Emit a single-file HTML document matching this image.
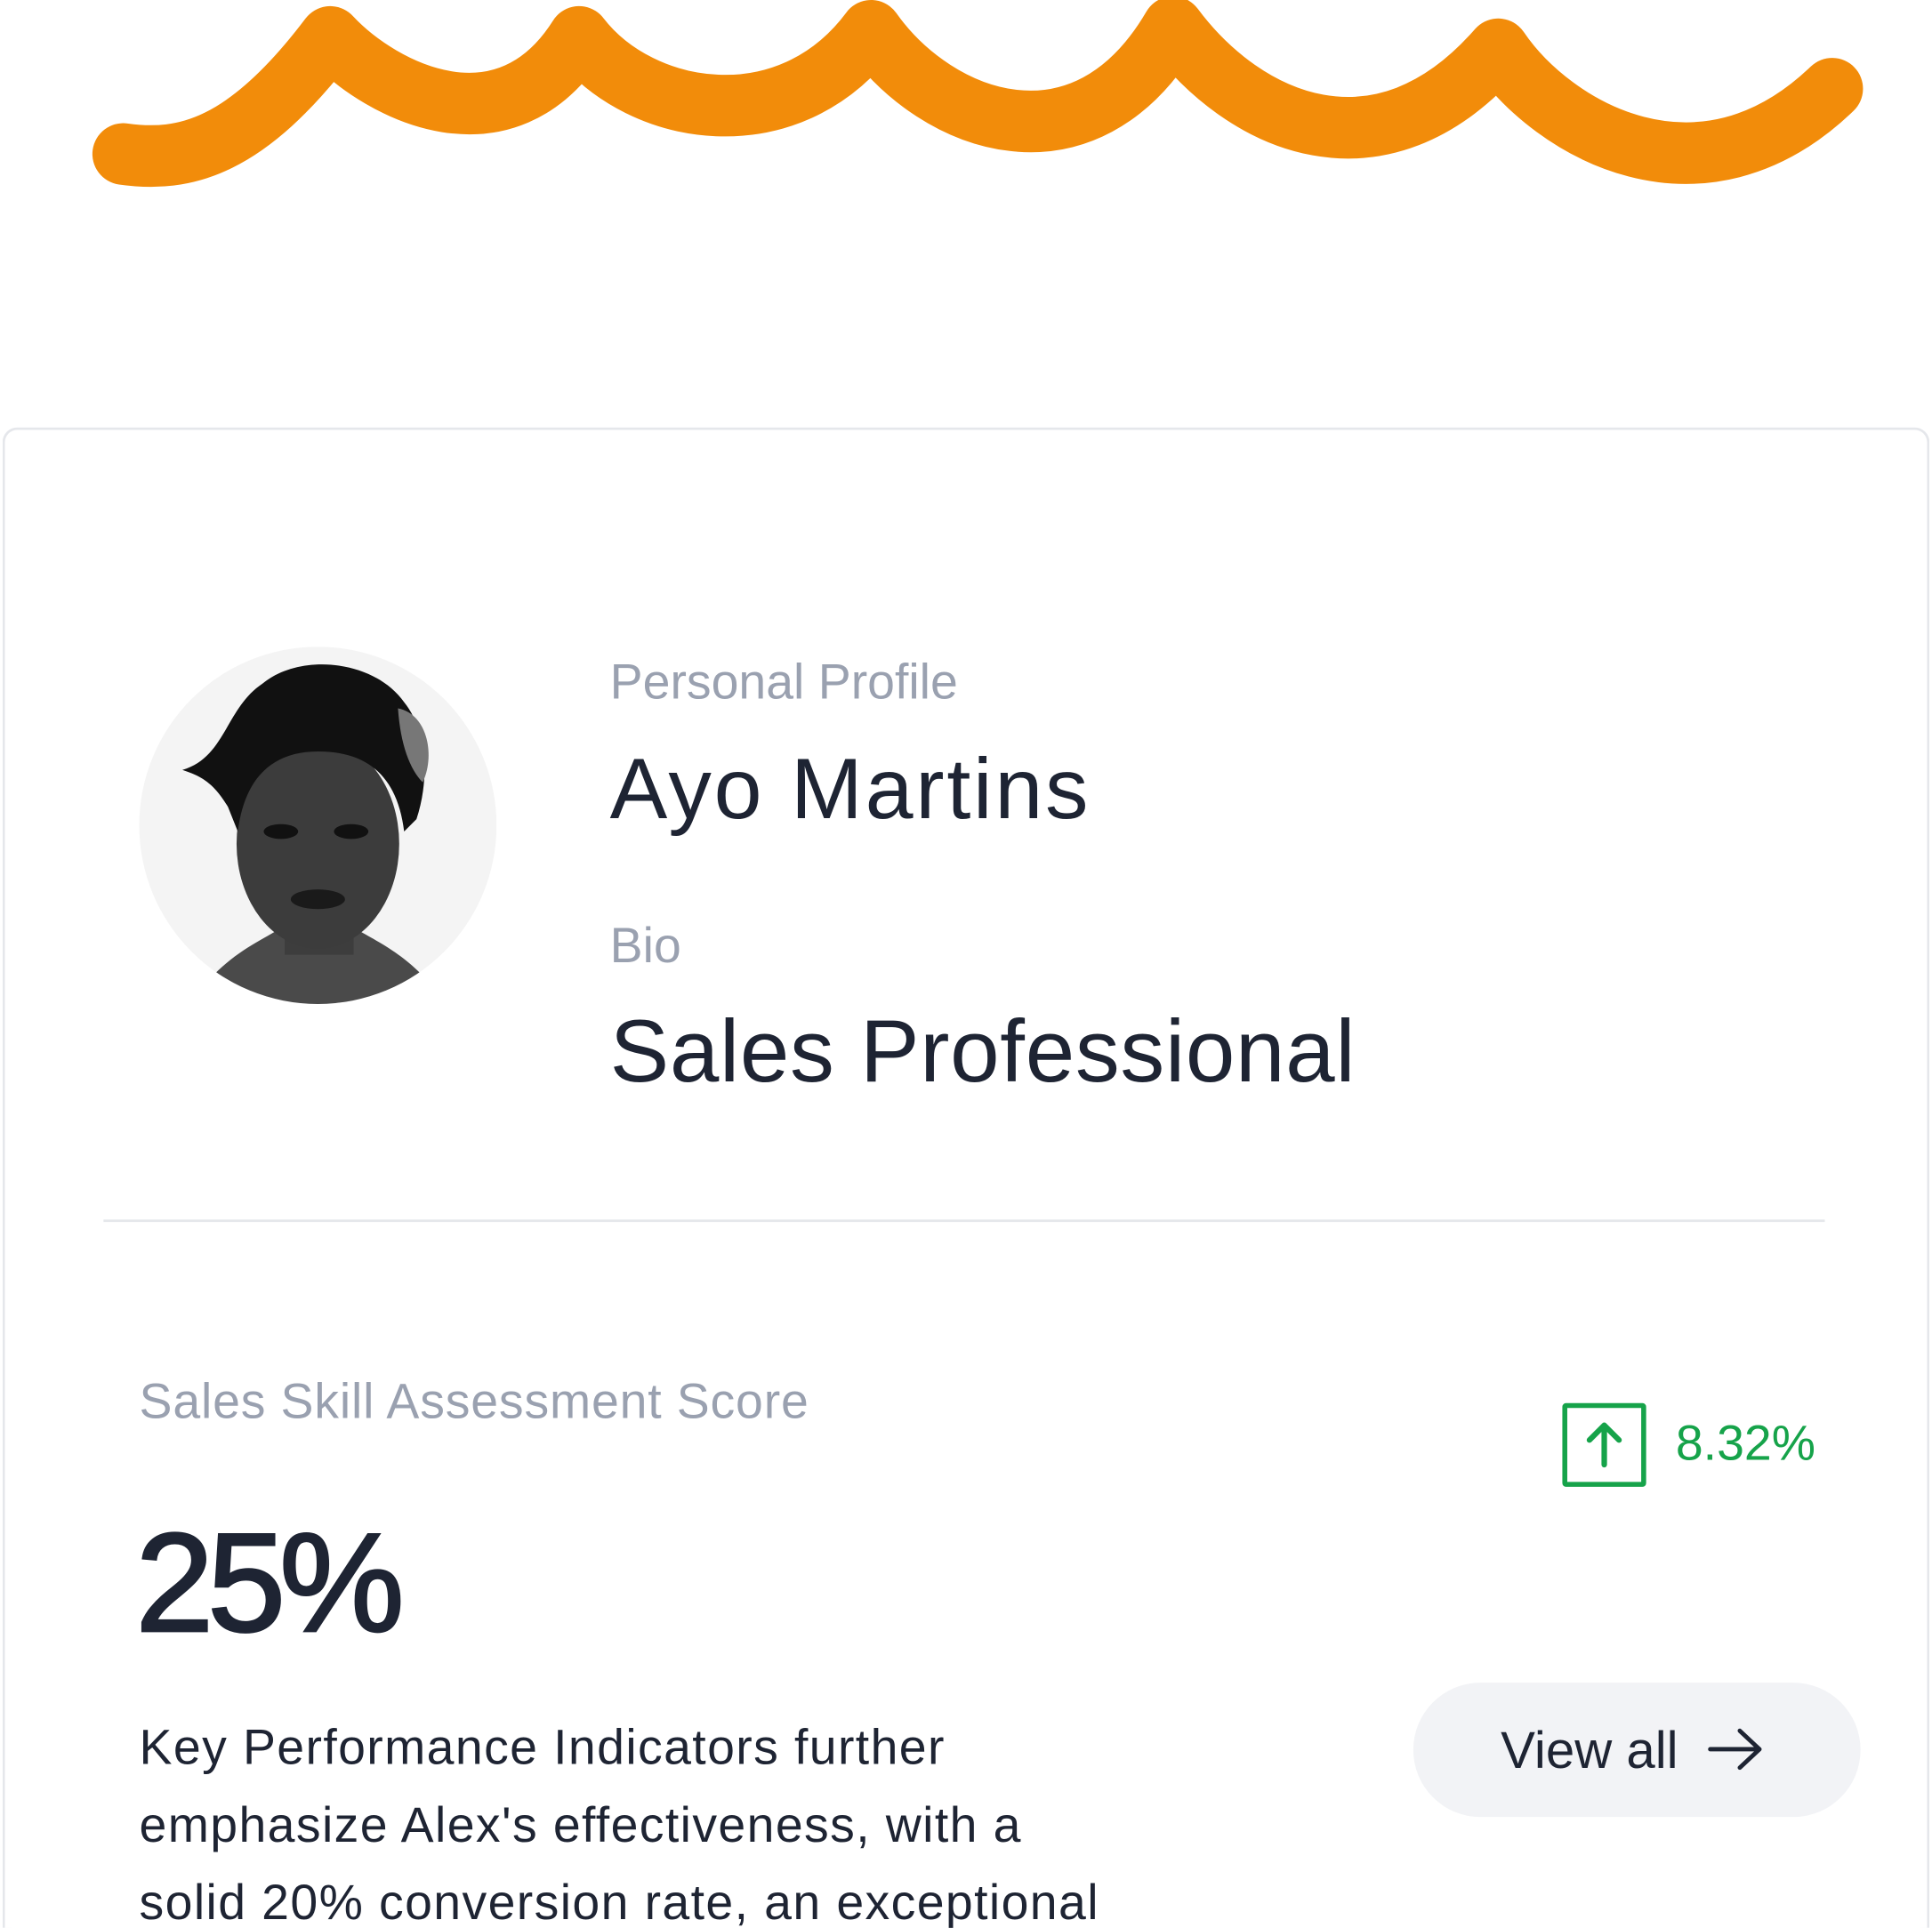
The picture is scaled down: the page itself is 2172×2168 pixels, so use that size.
<!DOCTYPE html>
<html><head><meta charset="utf-8"><style>
html,body{margin:0;padding:0;background:#fff;overflow:hidden;width:2172px;height:2168px;position:relative}
#w{position:absolute;left:0;top:0;width:1568px;height:1565px;overflow:hidden;transform:scale(1.3852);transform-origin:0 0;font-family:"Liberation Sans",sans-serif;color:#1e2433}
.t{position:absolute;white-space:nowrap}
.g{color:#9aa1b0}
</style></head><body><div id="w">
<svg style="position:absolute;left:0;top:0" width="1568" height="200" viewBox="0 0 1568 200">
<path d="M100,125 C150,132 200,120 268,30 C310,75 410,125 470,30 C520,95 640,115 707,25 C760,100 880,145 952,22 C1010,100 1120,150 1216,40 C1260,105 1380,175 1487,72" fill="none" stroke="#f28c0a" stroke-width="50" stroke-linecap="round" stroke-linejoin="round"/>
</svg>
<div style="position:absolute;left:2px;top:347px;width:1564px;height:1218px;border:2px solid #e5e7eb;border-bottom:none;border-radius:12px 12px 0 0;box-sizing:border-box"></div>
<svg style="position:absolute;left:113px;top:525px" width="290" height="290" viewBox="0 0 290 290">
<defs><clipPath id="c"><circle cx="145" cy="145" r="145"/></clipPath></defs>
<g clip-path="url(#c)">
<rect width="290" height="290" fill="#f4f4f4"/>
<path d="M30,310 C60,250 100,240 120,225 L170,225 C190,240 230,250 260,310 Z" fill="#4a4a4a"/>
<rect x="118" y="180" width="56" height="70" fill="#3d3d3d"/>
<ellipse cx="145" cy="160" rx="66" ry="85" fill="#3c3c3c"/>
<path d="M35,100 C70,90 70,50 100,30 C130,5 190,10 215,45 C235,70 235,110 225,140 L215,150 C210,110 190,85 145,85 C105,85 85,110 80,150 L72,130 C60,110 50,105 35,100 Z" fill="#111"/>
<path d="M210,50 C235,55 240,90 230,110 C220,100 212,80 210,50Z" fill="#777"/>
<ellipse cx="115" cy="150" rx="14" ry="6" fill="#111"/><ellipse cx="172" cy="150" rx="14" ry="6" fill="#111"/>
<ellipse cx="145" cy="205" rx="22" ry="8" fill="#1a1a1a"/>
</g></svg>
<div class="t g" style="left:495px;top:532px;font-size:40px">Personal Profile</div>
<div class="t" style="left:495px;top:600px;font-size:70px;letter-spacing:2px">Ayo Martins</div>
<div class="t g" style="left:495px;top:746px;font-size:40px">Bio</div>
<div class="t" style="left:495px;top:813px;font-size:72px;letter-spacing:0.5px">Sales Professional</div>
<div style="position:absolute;left:84px;top:990px;width:1397px;height:2px;background:#e5e7eb"></div>
<div class="t g" style="left:113px;top:1116px;font-size:40px;letter-spacing:0.6px">Sales Skill Assessment Score</div>
<div class="t" style="left:110px;top:1220px;font-size:114px;letter-spacing:-5px;-webkit-text-stroke:2px #1e2433">25%</div>
<div class="t" style="left:113px;top:1388px;font-size:40px;line-height:63px;letter-spacing:1px">Key Performance Indicators further<br>emphasize Alex's effectiveness, with a<br>solid 20% conversion rate, an exceptional</div>
<div style="position:absolute;left:1268px;top:1139px;width:68px;height:68px;border:4px solid #16a34a;border-radius:3px;box-sizing:border-box"></div>
<svg style="position:absolute;left:1268px;top:1139px" width="68" height="68" viewBox="0 0 68 68"><path d="M34,50 V18 M22,30 L34,18 L46,30" fill="none" stroke="#16a34a" stroke-width="4.5" stroke-linecap="round" stroke-linejoin="round"/></svg>
<div class="t" style="left:1360px;top:1150px;font-size:40px;color:#16a34a">8.32%</div>
<div style="position:absolute;left:1147px;top:1366px;width:363px;height:109px;border-radius:55px;background:#f2f3f6"></div>
<div class="t" style="left:1218px;top:1397px;font-size:42px">View all</div>
<svg style="position:absolute;left:1384px;top:1400px" width="50" height="40" viewBox="0 0 50 40"><path d="M4,20 H44 M28,5 L44,20 L28,35" fill="none" stroke="#1e2433" stroke-width="3.5" stroke-linecap="round" stroke-linejoin="round"/></svg>
</div></body></html>
